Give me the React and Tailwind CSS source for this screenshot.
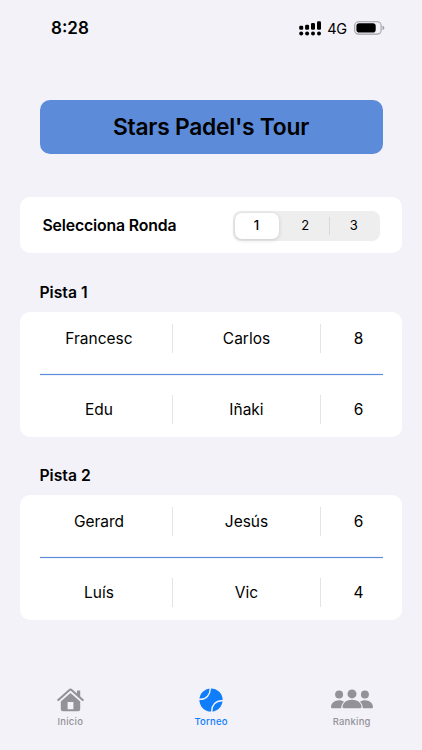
import React, { useState } from 'react';

const courts = [
  {
    name: 'Pista 1',
    teams: [
      { players: ['Francesc', 'Carlos'], score: 8 },
      { players: ['Edu', 'Iñaki'], score: 6 },
    ],
  },
  {
    name: 'Pista 2',
    teams: [
      { players: ['Gerard', 'Jesús'], score: 6 },
      { players: ['Luís', 'Vic'], score: 4 },
    ],
  },
];

const SignalIcon = () => (
  <svg width="23" height="15" viewBox="0 0 23 15" fill="black">
    <rect x="0.2" y="4.8" width="4" height="4" rx="1.3" />
    <rect x="6.1" y="3.8" width="4" height="5" rx="1.3" />
    <rect x="12" y="2" width="4" height="6.8" rx="1.3" />
    <rect x="18" y="0.2" width="4" height="8.6" rx="1.3" />
    <circle cx="2.2" cy="12.6" r="2" />
    <circle cx="8.1" cy="12.6" r="2" />
    <circle cx="14" cy="12.6" r="2" />
    <circle cx="20" cy="12.6" r="2" />
  </svg>
);

const BatteryIcon = () => (
  <svg width="31" height="14" viewBox="0 0 31 14">
    <rect x="0.7" y="0.7" width="26.4" height="12.4" rx="3.8" fill="none" stroke="#a09fa5" strokeWidth="1.1" />
    <rect x="2.4" y="2.3" width="19.3" height="9.2" rx="2.8" fill="black" />
    <path d="M28.5 4.7c1.1.4 1.8 1.2 1.8 2.2s-.7 1.8-1.8 2.2z" fill="#a09fa5" />
  </svg>
);

const HomeIcon = () => (
  <svg width="27" height="24" viewBox="0 0 27 24">
    <path
      d="M1.3 12 12.2 2.2q1.3-1.1 2.6 0L25.7 12"
      fill="none"
      stroke="currentColor"
      strokeWidth="2.1"
      strokeLinecap="round"
      strokeLinejoin="round"
    />
    <path d="M20 2.4h3.2v7.4L20 7z" fill="currentColor" />
    <path
      d="M13.5 4.9 23.2 13.5v7.8q0 2-2 2H5.8q-2 0-2-2v-7.8zM10.6 14v7.2h5.8V14z"
      fill="currentColor"
      fillRule="evenodd"
    />
  </svg>
);

const BallIcon = () => (
  <svg width="24" height="24" viewBox="0 0 24 24">
    <circle cx="12" cy="12" r="11.6" fill="currentColor" />
    <g fill="none" stroke="#f3f2f8" strokeWidth="1.4">
      <path d="M11.2 0Q11.6 5 8.4 8.4T0 11.2" />
      <path d="M12.8 24q-.4-5 2.8-8.4T24 12.8" />
    </g>
  </svg>
);

const PeopleIcon = () => (
  <svg width="42" height="21" viewBox="0 0 42 21" fill="currentColor">
    <circle cx="8.1" cy="5.6" r="4" />
    <circle cx="33.9" cy="5.6" r="4" />
    <path d="M0 18.2c0-4 3.4-7 8-7 2 0 3.8.6 5.1 1.5-1.8 1.6-2.9 3.8-2.9 6.6H1.2Q0 19.3 0 18.2z" />
    <path d="M42 18.2c0-4-3.4-7-8-7-2 0-3.8.6-5.1 1.5 1.8 1.6 2.9 3.8 2.9 6.6h9Q42 19.3 42 18.2z" />
    <circle cx="21" cy="4.9" r="4.5" />
    <path d="M11.5 18c0-4.2 4-7.3 9.5-7.3s9.5 3.1 9.5 7.3q0 1.3-1.4 1.3H12.9q-1.4 0-1.4-1.3z" />
  </svg>
);

const StatusBar = () => (
  <div className="flex h-[56px] items-center justify-between pl-[51px] pr-[37px]">
    <span className="pt-[2px] text-[17px] font-semibold">8:28</span>
    <div className="flex items-center">
      <SignalIcon />
      <span className="ml-[5px] mr-[7px] pt-px text-[14.5px] tracking-[-0.2px]">4G</span>
      <BatteryIcon />
    </div>
  </div>
);

const RoundPicker = ({ round, onChange }) => (
  <div className="flex h-[56px] items-center justify-between rounded-[10px] bg-white pl-[22.5px] pr-[22.5px]">
    <span className="pt-[2px] text-[15.8px] font-semibold tracking-[-0.15px]">Selecciona Ronda</span>
    <div className="mt-px flex h-[30px] w-[147px] items-center rounded-[8px] bg-[#eeeeef] p-[2px]">
      {[1, 2, 3].map((n) => (
        <React.Fragment key={n}>
          {n > 1 && (
            <div className={`h-[18px] w-px ${round === n || round === n - 1 ? 'mx-[1px] bg-transparent' : 'bg-[#d8d8dc]'}`}></div>
          )}
          <button
            onClick={() => onChange(n)}
            className={`h-full pt-[1px] text-[13px] rounded-[7px] ${
              round === n ? 'w-[44px] bg-white font-medium shadow-[0_1px_4px_rgba(0,0,0,0.16)]' : 'flex-1'
            }`}
          >
            {n}
          </button>
        </React.Fragment>
      ))}
    </div>
  </div>
);

const TeamRow = ({ team }) => (
  <div className="flex h-[29px] items-center text-center text-[15.5px]">
    <span className="w-[132px] pr-[13px]">{team.players[0]}</span>
    <div className="h-full w-px bg-[#e4e4e6]"></div>
    <span className="w-[147px] pl-px">{team.players[1]}</span>
    <div className="h-full w-px bg-[#e4e4e6]"></div>
    <span className="flex-1 pl-[14px]">{team.score}</span>
  </div>
);

const Court = ({ court }) => (
  <section>
    <h2 className="h-[20px] pl-[19.5px] text-[15.7px] leading-[22px] font-semibold">{court.name}</h2>
    <div className="mt-[10px] h-[125px] rounded-[10px] bg-white px-[19.5px] pt-[12px]">
      <TeamRow team={court.teams[0]} />
      <div className="mt-[21px] mb-[20px] h-px bg-[#5c8bda] shadow-[0_0_1px_#5c8bda]"></div>
      <TeamRow team={court.teams[1]} />
    </div>
  </section>
);

const Tab = ({ icon, label, active = false }) => (
  <button className={`flex flex-1 flex-col items-center ${active ? 'text-[#107dfb]' : 'text-[#939298]'}`}>
    <span className="flex h-[25px] items-center">{icon}</span>
    <span className="mt-[4px] text-[9.5px] leading-[12px] font-medium tracking-[0.2px]">{label}</span>
  </button>
);

const App = () => {
  const [round, setRound] = useState(1);

  return (
    <div className="flex h-[750px] w-[422px] flex-col bg-[#f3f2f8] font-['Inter',sans-serif] text-black">
      <StatusBar />
      <main className="flex-1 px-[20px] pt-[43.5px]">
        <h1 className="mx-[19.5px] flex h-[54px] items-center justify-center rounded-[10px] bg-[#5c8bda] pt-[1px] text-[22.8px] font-semibold tracking-[-0.25px]">
          Stars Padel's Tour
        </h1>
        <div className="mt-[43.5px]">
          <RoundPicker round={round} onChange={setRound} />
        </div>
        <div className="mt-[29px] flex flex-col gap-[28px]">
          {courts.map((court) => (
            <Court key={court.name} court={court} />
          ))}
        </div>
      </main>
      <nav className="flex h-[63px]">
        <Tab icon={<HomeIcon />} label="Inicio" />
        <Tab icon={<BallIcon />} label="Torneo" active />
        <Tab icon={<PeopleIcon />} label="Ranking" />
      </nav>
    </div>
  );
};

export default App;
